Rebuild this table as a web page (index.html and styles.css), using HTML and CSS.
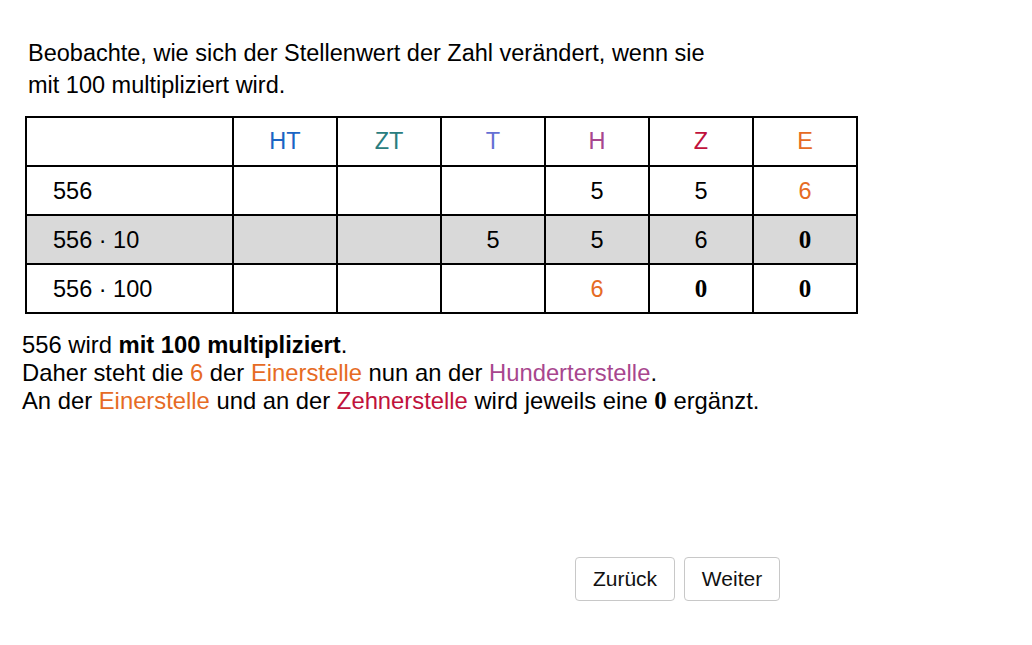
FILE: index.html
```html
<!DOCTYPE html>
<html lang="de">
<head>
<meta charset="utf-8">
<link rel="stylesheet" href="styles.css">
</head>
<body>
<div class="page">
  <p class="intro">Beobachte, wie sich der Stellenwert der Zahl verändert, wenn sie<br>mit 100 multipliziert wird.</p>
  <table class="pv">
    <tr class="head">
      <td class="label"></td>
      <td class="c-ht">HT</td>
      <td class="c-zt">ZT</td>
      <td class="c-t">T</td>
      <td class="c-h">H</td>
      <td class="c-z">Z</td>
      <td class="c-e">E</td>
    </tr>
    <tr>
      <td class="label">556</td>
      <td></td><td></td><td></td>
      <td>5</td><td>5</td><td class="c-e">6</td>
    </tr>
    <tr class="gray">
      <td class="label">556 · 10</td>
      <td></td><td></td>
      <td>5</td><td>5</td><td>6</td><td class="zero">0</td>
    </tr>
    <tr>
      <td class="label">556 · 100</td>
      <td></td><td></td><td></td>
      <td class="c-e">6</td><td class="zero">0</td><td class="zero">0</td>
    </tr>
  </table>
  <div class="expl">
    <p>556 wird <b>mit 100 multipliziert</b>.</p>
    <p>Daher steht die <span class="c-e">6</span> der <span class="c-e">Einerstelle</span> nun an der <span class="c-h">Hunderterstelle</span>.<br>An der <span class="c-e">Einerstelle</span> und an der <span class="c-z">Zehnerstelle</span> wird jeweils eine <b class="zero">0</b> ergänzt.</p>
  </div>
  <div class="nav">
    <button class="btn btn-back">Zurück</button>
    <button class="btn btn-next">Weiter</button>
  </div>
</div>
</body>
</html>
```

FILE: styles.css
```css
html, body {
  margin: 0;
  padding: 0;
  background: #ffffff;
}
body {
  font-family: "Liberation Sans", Arial, sans-serif;
  font-size: 23.5px;
  color: #000000;
}
.page {
  width: 1032px;
  height: 645px;
  padding: 37px 0 0 22px;
  box-sizing: border-box;
}
.intro {
  margin: 0 0 15px 6px;
  line-height: 32px;
}
.pv {
  margin-left: 3px;
  border-collapse: collapse;
  table-layout: fixed;
}
.pv td {
  border: 2px solid #000;
  width: 102px;
  height: 47px;
  padding: 0;
  text-align: center;
  line-height: 26px;
  box-sizing: content-box;
}
.pv td.label {
  width: 179px;
  text-align: left;
  padding-left: 26px;
}
.pv tr.gray td {
  background: #d9d9d9;
}
.pv tr.head td {
  padding-bottom: 2px;
  height: 45px;
}
.zero {
  font-family: "Liberation Serif", "Times New Roman", serif;
  font-weight: bold;
  font-size: 25px;
}
.c-ht { color: #1a64c4; }
.c-zt { color: #2a7d80; }
.c-t { color: #6470d4; }
.c-h { color: #a8468e; }
.c-z { color: #c0123c; }
.c-e { color: #e66b24; }
.expl {
  margin-top: 17px;
  font-size: 23.8px;
}
.expl p {
  margin: 0;
  line-height: 28px;
}
.nav {
  display: flex;
  gap: 9px;
  margin: 142px 0 0 553px;
}
.btn {
  height: 44px;
  box-sizing: border-box;
  background: #ffffff;
  border: 1px solid #c8c8c8;
  border-radius: 4px;
  font-family: "Liberation Sans", Arial, sans-serif;
  font-size: 21px;
  color: #111;
  padding: 0;
}
.btn-back { width: 100px; }
.btn-next { width: 96px; }
```
